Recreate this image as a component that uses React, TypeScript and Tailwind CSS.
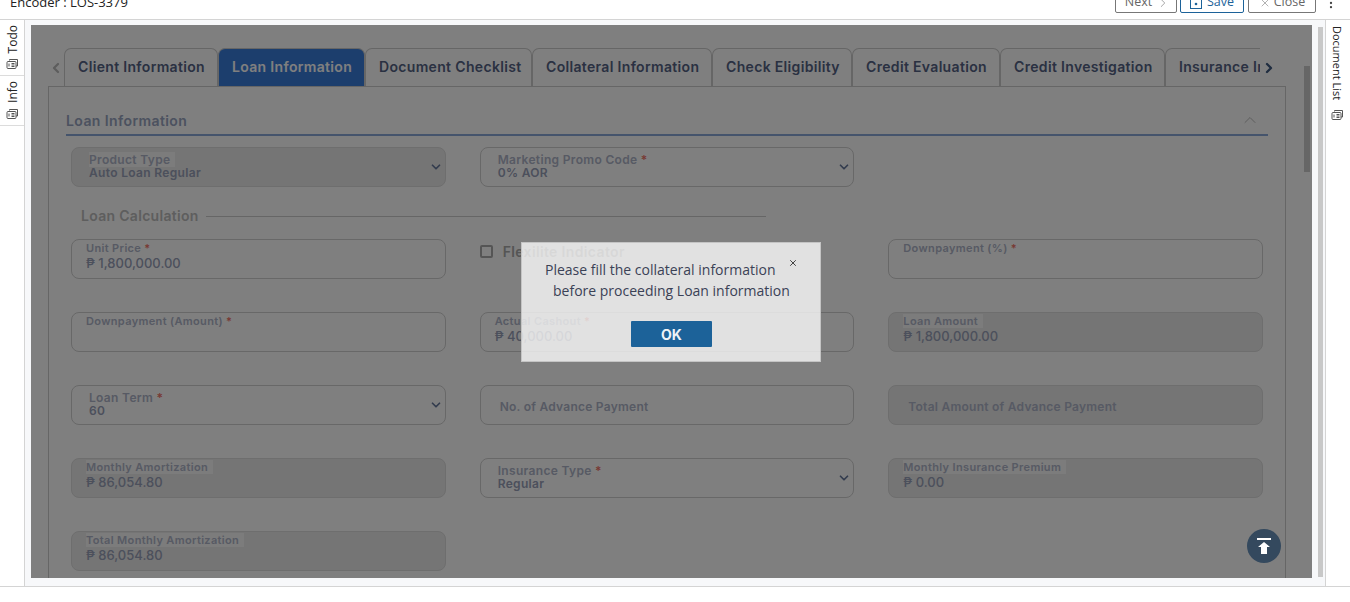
import React from "react";
import { ChevronDown, ChevronUp, ChevronLeft, ChevronRight, X, EllipsisVertical } from "lucide-react";

const tabs = [
  { label: "Client Information", width: "w-[154px]" },
  { label: "Loan Information", width: "w-[147px]", active: true },
  { label: "Document Checklist", width: "w-[167px]" },
  { label: "Collateral Information", width: "w-[180px]" },
  { label: "Check Eligibility", width: "w-[140px]" },
  { label: "Credit Evaluation", width: "w-[148px]" },
  { label: "Credit Investigation", width: "w-[165px]" },
  { label: "Insurance Information", width: "w-[180px]" },
];

const bodyFont = "font-['Inter','Liberation_Sans',sans-serif]";

const DocIcon = () => (
  <svg width="13" height="12" viewBox="0 0 13 12" fill="none" stroke="#555" strokeWidth="1">
    <path d="M3.5 2.5V1.5H11.5V8H10" />
    <rect x="1" y="3.5" width="9" height="7" rx="1" fill="#fff" />
    <path d="M5.5 5.5H8.5M5.5 7H8.5M5.5 8.5H8.5M3 5.5V8.5" />
  </svg>
);

const SaveIcon = () => (
  <svg width="12" height="13" viewBox="0 0 12 13" fill="none" stroke="#1c6299" strokeWidth="1">
    <rect x="0.5" y="0.5" width="11" height="12" />
    <path d="M3 0.5V3.5H9V0.5" />
    <circle cx="6" cy="8" r="1.3" fill="#1c6299" stroke="none" />
  </svg>
);

const TopArrow = () => (
  <svg width="20" height="20" viewBox="0 0 20 20" fill="#fff">
    <rect x="3" y="2" width="14" height="2" />
    <path d="M10 6L16 11H13V18H7V11H4Z" />
  </svg>
);

const RailLabel = ({ label, className }: { label: string; className: string }) => (
  <span className={`[writing-mode:vertical-rl] font-['Open_Sans',sans-serif] leading-[12px] text-[#222] ${className}`}>
    {label}
  </span>
);

const Req = () => <span className="text-[#f07468]"> *</span>;

type FieldProps = { label: string; value?: string; req?: boolean; disabled?: boolean };

const InputField = ({ label, value, req, disabled }: FieldProps) => (
  <div className={`h-[40px] rounded-[8px] border px-[14px] pt-[1px] ${disabled ? "bg-[#eaeaea] border-[#dcdcdc]" : "bg-white border-[#d0d0d0]"}`}>
    <div className="text-[11px] leading-[14px] font-semibold tracking-[0.35px] text-[#aeb4c8] whitespace-nowrap">
      <span className={disabled ? "bg-[#f8f8f8] pr-[5px]" : ""}>{label}</span>
      {req && <Req />}
    </div>
    <div className="text-[13px] leading-[17px] font-medium text-[#98a0b8] whitespace-nowrap">{value}</div>
  </div>
);

const SelectField = ({ label, value, req, disabled }: FieldProps) => (
  <div className={`h-[40px] rounded-[8px] border pl-[17px] pr-[2px] flex items-center justify-between ${disabled ? "bg-[#eaeaea] border-[#dcdcdc]" : "bg-white border-[#d0d0d0]"}`}>
    <div className="pb-[2px] text-[12px] leading-[13px] font-semibold tracking-[0.33px] whitespace-nowrap">
      <div className="text-[#aeb4c8]">
        <span className={disabled ? "bg-[#f8f8f8] pr-[5px]" : ""}>{label}</span>
        {req && <Req />}
      </div>
      <div className="text-[#98a0b8]">{value}</div>
    </div>
    <ChevronDown size={14} strokeWidth={3} className="text-[#66789c]" />
  </div>
);

const PlainField = ({ label, disabled }: { label: string; disabled?: boolean }) => (
  <div className={`h-[40px] rounded-[8px] border pl-[19px] pt-[4px] flex items-center text-[12px] font-semibold tracking-[0.25px] text-[#aeb4c8] ${disabled ? "bg-[#eaeaea] border-[#dcdcdc]" : "bg-white border-[#d0d0d0]"}`}>
    {label}
  </div>
);

export default function App() {
  return (
    <div className={`h-[602px] w-[1350px] overflow-hidden bg-white flex flex-col ${bodyFont}`}>
      {/* top bar, page is scrolled a bit so it is cut off */}
      <div className="h-[20px] shrink-0 border-b border-[#d4d4d4] overflow-hidden">
        <div className="-mt-[8px] h-[21px] flex items-center pl-[10px] font-['Open_Sans',sans-serif] text-[12.5px]">
          <span className="text-[13px] text-[#222] flex-1">Encoder : LOS-3379</span>
          <button className="w-[62px] h-[21px] border border-[#777] rounded-[2px] text-[#666] flex items-center justify-center gap-[4px] pl-[3px]">
            Next <ChevronRight size={14} strokeWidth={1} />
          </button>
          <button className="ml-[3px] w-[64px] h-[21px] border border-[#1c6299] rounded-[2px] text-[#1c6299] flex items-center justify-center gap-[5px]">
            <SaveIcon /> Save
          </button>
          <button className="ml-[4px] w-[68px] h-[21px] border border-[#777] rounded-[2px] text-[#666] flex items-center justify-center gap-[3px]">
            <X size={12} strokeWidth={1} /> Close
          </button>
          <EllipsisVertical size={14} className="ml-[8px] mr-[12px] text-[#444]" />
        </div>
      </div>

      <div className="h-[567px] shrink-0 flex border-b border-[#d4d4d4]">
        {/* left rail */}
        <div className="w-[25px] shrink-0 border-r border-[#d4d4d4] flex flex-col">
          <div className="h-[56px] border-b border-[#dcdcdc] flex flex-col items-center pl-[1px] pt-[5px] gap-[5px]">
            <RailLabel label="Todo" className="rotate-180 text-[12px]" />
            <DocIcon />
          </div>
          <div className="h-[50px] border-b border-[#dcdcdc] flex flex-col items-center pl-[1px] pt-[5px] gap-[5px]">
            <RailLabel label="Info" className="rotate-180 text-[12px]" />
            <DocIcon />
          </div>
        </div>

        {/* middle */}
        <div className="w-[1300px] shrink-0 bg-[#f7f8fa] flex pl-[6px] pt-[5px]">
          <div className="relative w-[1281px] h-[553px] bg-white overflow-hidden flex">
            <div className="w-[1273px] pl-[17px] pr-[18px] pt-[23px]">
              <div className="h-[38px] flex">
                <div className="w-[16px] flex items-center">
                  <ChevronLeft size={16} strokeWidth={3.5} className="text-[#bbb] mt-[2px]" />
                </div>
                <div className="w-[1196px] flex overflow-hidden">
                  {tabs.map((t) => (
                    <div
                      key={t.label}
                      className={`${t.width} shrink-0 h-[38px] rounded-t-[7px] border border-b-0 border-[#ccc] flex items-center pl-[13px] pb-[2px] text-[14px] font-semibold tracking-[0.33px] whitespace-nowrap ${
                        t.active ? "bg-[#397cdb] text-white" : "bg-white text-[#546284]"
                      }`}
                    >
                      {t.label}
                    </div>
                  ))}
                </div>
                <div className="flex items-center">
                  <ChevronRight size={16} strokeWidth={3.5} className="text-[#3f5a80] mt-[2px] ml-[1px]" />
                </div>
              </div>

              <div className="h-[600px] w-[1238px] border border-[#ccc] px-[17px]">
                <div className="h-[49px] border-b-2 border-[#8ba9d8] flex items-end justify-between pb-[3px]">
                  <span className="text-[14px] leading-[20px] font-semibold tracking-[0.4px] text-[#98a4c0]">Loan Information</span>
                  <ChevronUp size={20} strokeWidth={1.2} className="text-[#bbb] mr-[8px] mb-[1px]" />
                </div>

                <div className="pl-[5px] pr-[5px] pt-[11px]">
                  <div className="grid grid-cols-3 gap-x-[34px]">
                    <SelectField label="Product Type" value="Auto Loan Regular" disabled />
                    <SelectField label="Marketing Promo Code" value="0% AOR" req />
                    <div />
                  </div>

                  <div className="h-[52px] flex items-center pl-[10px] pt-[4px]">
                    <span className="text-[14px] font-semibold tracking-[0.3px] text-[#bcbcbc]">Loan Calculation</span>
                    <div className="ml-[7px] w-[560px] h-px bg-[#ccc] mt-[2px]" />
                  </div>

                  <div className="grid grid-cols-3 gap-x-[34px] gap-y-[33px]">
                    <InputField label="Unit Price" value="₱ 1,800,000.00" req />
                    <div className="h-[40px] flex items-start pt-[5px] gap-[10px]">
                      <div className="mt-[1px] w-[13px] h-[13px] border-2 border-[#aaa] rounded-[2px]" />
                      <span className="text-[14px] font-semibold leading-[16px] tracking-[0.35px] text-[#aaa]">Flexilite Indicator</span>
                    </div>
                    <InputField label="Downpayment (%)" req />

                    <InputField label="Downpayment (Amount)" req />
                    <InputField label="Actual Cashout" value="₱ 40,000.00" req />
                    <InputField label="Loan Amount" value="₱ 1,800,000.00" disabled />

                    <SelectField label="Loan Term" value="60" req />
                    <PlainField label="No. of Advance Payment" />
                    <PlainField label="Total Amount of Advance Payment" disabled />

                    <InputField label="Monthly Amortization" value="₱ 86,054.80" disabled />
                    <SelectField label="Insurance Type" value="Regular" req />
                    <InputField label="Monthly Insurance Premium" value="₱ 0.00" disabled />

                    <InputField label="Total Monthly Amortization" value="₱ 86,054.80" disabled />
                  </div>
                </div>
              </div>
            </div>

            {/* inner scrollbar */}
            <div className="w-[6px] pt-[41px]">
              <div className="h-[106px] bg-[#cccccc]" />
            </div>

            {/* modal backdrop */}
            <div className="absolute inset-0 bg-black/50" />
          </div>

          <div className="ml-[6px] mt-[2px] w-[5px] h-[550px] bg-[#c8c8c8]" />
        </div>

        {/* right rail */}
        <div className="w-[25px] shrink-0 border-l border-[#d4d4d4] flex flex-col items-center pt-[6px] pr-[2px] gap-[9px]">
          <RailLabel label="Document List" className="text-[11px]" />
          <DocIcon />
        </div>
      </div>

      {/* dialog */}
      <div className="absolute left-[521px] top-[242px] w-[300px] h-[120px] border border-[#c4c4c4] bg-white/[0.77] font-['Open_Sans',sans-serif] text-[14px] text-[#3b4256]">
        <button className="absolute right-[22px] top-[15px] text-[#222]">
          <X size={10} strokeWidth={2} />
        </button>
        <div className="pt-[16px] leading-[21px]">
          <p className="pl-[23px]">Please fill the collateral information</p>
          <p className="pl-[31px]">before proceeding Loan information</p>
        </div>
        <div className="flex justify-center mt-[20px] pl-[1px]">
          <button className={`w-[81px] h-[26px] bg-[#1c6299] text-[#eef3f7] rounded-[1px] text-[14px] font-bold ${bodyFont}`}>
            OK
          </button>
        </div>
      </div>

      {/* back to top */}
      <button className="absolute left-[1247px] top-[529px] w-[34px] h-[34px] rounded-full bg-[#34495e] flex items-center justify-center">
        <TopArrow />
      </button>
    </div>
  );
}
